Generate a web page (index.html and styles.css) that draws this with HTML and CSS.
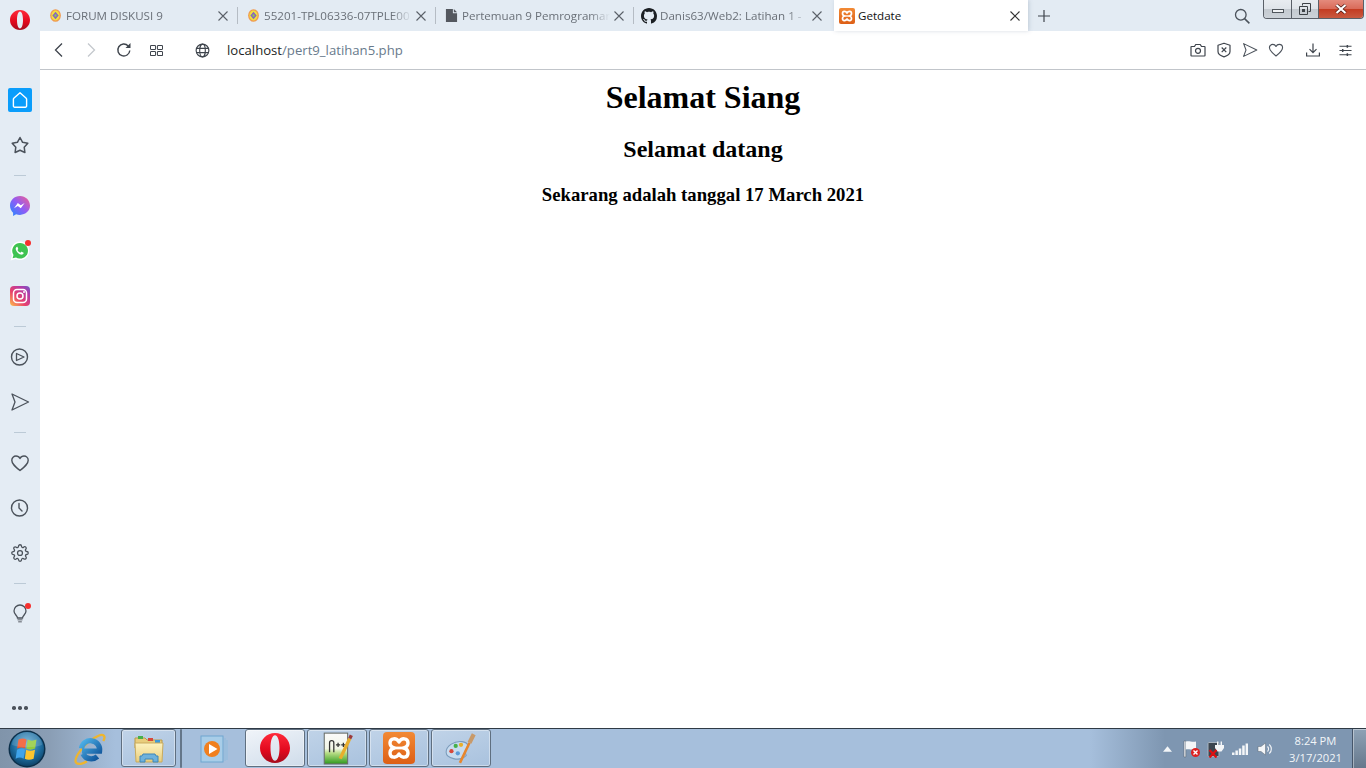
FILE: index.html
```html
<!DOCTYPE html>
<html lang="en">
<head>
<meta charset="utf-8">
<title>Getdate</title>
<link rel="stylesheet" href="styles.css">
</head>
<body>
<svg class="defs" aria-hidden="true">
  <defs>
    <linearGradient id="opera" x1="0" y1="0" x2="0" y2="1"><stop offset="0" stop-color="#ff2a3a"/><stop offset="0.6" stop-color="#e0081d"/><stop offset="1" stop-color="#a50b1c"/></linearGradient>
    <linearGradient id="msgr" x1="0" y1="1" x2="1" y2="0"><stop offset="0" stop-color="#1f8bff"/><stop offset="0.5" stop-color="#8f5cf6"/><stop offset="1" stop-color="#f5608c"/></linearGradient>
    <linearGradient id="insta" x1="0" y1="1" x2="1" y2="0"><stop offset="0" stop-color="#fdc14a"/><stop offset="0.4" stop-color="#e8416c"/><stop offset="0.75" stop-color="#b23aa8"/><stop offset="1" stop-color="#6f5bc8"/></linearGradient>
    <radialGradient id="orb" cx="0.5" cy="0.35" r="0.7"><stop offset="0" stop-color="#6ab0d8"/><stop offset="0.6" stop-color="#1d6c9e"/><stop offset="1" stop-color="#0c3a5c"/></radialGradient>
    <linearGradient id="iee" x1="0" y1="0" x2="1" y2="1"><stop offset="0" stop-color="#4fb4ea"/><stop offset="1" stop-color="#0c4f96"/></linearGradient>
    <linearGradient id="folder" x1="0" y1="0" x2="0" y2="1"><stop offset="0" stop-color="#fdf3c0"/><stop offset="1" stop-color="#e9cd7c"/></linearGradient>
    <linearGradient id="xamppbg" x1="0" y1="0" x2="0" y2="1"><stop offset="0" stop-color="#f28a35"/><stop offset="1" stop-color="#dd5f16"/></linearGradient>
    <linearGradient id="note" x1="0" y1="0" x2="0" y2="1"><stop offset="0" stop-color="#fafafa"/><stop offset="0.5" stop-color="#f2f6e6"/><stop offset="0.65" stop-color="#b6dc84"/><stop offset="1" stop-color="#2f9a1f"/></linearGradient>
    <symbol id="s-opera" viewBox="0 0 20 20"><path fill="url(#opera)" fill-rule="evenodd" d="M10 0c5.600 0 10 4.500 10 10s-4.400 10-10 10S0 15.500 0 10 4.400 0 10 0zm0 1.500c-1.900 0-3 3.800-3 8.500s1.100 8.500 3 8.500 3-3.800 3-8.500S11.900 1.500 10 1.500z"/></symbol>
    <symbol id="s-xampp" viewBox="0 0 16 16"><rect width="16" height="16" rx="2" fill="url(#xamppbg)"/><path fill="none" stroke="#fff" stroke-width="1.700" stroke-linejoin="round" d="M3.500 5.500C3.500 2.800 6.800 2.800 8 5c1.200-2.200 4.500-2.200 4.500.5 0 1.300-1 2.200-2.200 2.500 1.200.3 2.200 1.200 2.200 2.500 0 2.700-3.300 2.700-4.500.5-1.200 2.200-4.500 2.200-4.500-.5 0-1.300 1-2.200 2.200-2.500C4.500 7.700 3.500 6.800 3.500 5.500z"/><path stroke="#fff" stroke-width="1.400" d="M6 8h4"/></symbol>
    <symbol id="s-campus" viewBox="0 0 14 14"><ellipse cx="7" cy="7" rx="5.800" ry="6.800" fill="#f09a50"/><ellipse cx="7" cy="7" rx="4.400" ry="5.300" fill="#f2e23e"/><path fill="#8a62c0" d="M7 3l3.400 4L7 11 3.600 7z"/><path fill="#8fc05a" d="M7 5.200L8.600 7 7 8.800 5.400 7z"/></symbol>
    <symbol id="s-doc" viewBox="0 0 12 14"><path fill="#54585f" d="M0 0h7.500v4.500H12V14H0zM8.500 0L12 3.500H8.500z"/></symbol>
    <symbol id="s-send" viewBox="0 0 20 20"><path fill="none" stroke="#4b525b" stroke-width="1.300" stroke-linejoin="round" d="M2 2l16.500 8L2 18l3-8z"/></symbol>
    <symbol id="s-heart" viewBox="0 0 20 20"><path fill="none" stroke="#4b525b" stroke-width="1.400" stroke-linejoin="round" d="M10 17.500C5 13.500 1.800 10.800 1.800 7.200 1.800 4.700 3.800 3 6 3c1.700 0 3.200.9 4 2.500C10.800 3.900 12.300 3 14 3c2.200 0 4.200 1.700 4.200 4.200 0 3.600-3.200 6.300-8.200 10.300z"/></symbol>
  </defs>
</svg>

<div class="browser">
  <aside class="sidebar">
    <div class="logo"><svg class="i20"><use href="#s-opera"/></svg></div>
    <div class="side-item"><span class="home-tile"><svg class="i20" viewBox="0 0 20 20"><path fill="none" stroke="#fff" stroke-width="1.400" stroke-linejoin="round" d="M10 2.800l6.200 5.400c.3.300.4.500.4.900V16a1.200 1.200 0 0 1-1.200 1.200H4.600A1.200 1.200 0 0 1 3.400 16V9.100c0-.4.100-.6.400-.9z"/></svg></span></div>
    <div class="side-item"><svg class="i20" viewBox="0 0 20 20"><path fill="none" stroke="#4b525b" stroke-width="1.500" stroke-linejoin="round" d="M10 2.500l2.600 4.800 5.200 1-3.600 3.900.7 5.300-4.900-2.300-4.900 2.300.7-5.300-3.600-3.900 5.200-1z"/></svg></div>
    <div class="side-sep"></div>
    <div class="side-item"><svg class="i20" viewBox="0 0 20 20"><path fill="url(#msgr)" d="M10 0C4.400 0 0 4.100 0 9.600c0 2.900 1.200 5.400 3.100 7.100V20l3-1.700c1.200.4 2.500.6 3.900.6 5.600 0 10-4.100 10-9.300S15.600 0 10 0z"/><path fill="#fff" d="M4 12.300l3.800-5.300 3 2.300 3.800-2.300-3.800 5.300-3-2.300z"/></svg></div>
    <div class="side-item dot-host"><svg class="i20" viewBox="0 0 20 20"><path fill="#fff" d="M10 .5a9.300 9.300 0 0 0-8 14L.5 19.500l5.200-1.400A9.300 9.300 0 1 0 10 .5z"/><path fill="#3fc351" d="M10 2a7.800 7.800 0 0 0-6.500 12l-.9 3.300 3.400-.9A7.800 7.800 0 1 0 10 2z"/><path fill="#fff" d="M7.400 5.800c-.4-.1-.9.200-1.300.7-.6.800-.5 2 .5 3.700 1.100 1.800 2.700 3 4.300 3.400 1.200.3 2.200-.2 2.600-1 .2-.4.200-.8.100-.9l-1.900-1c-.2-.1-.4 0-.5.100l-.7.900c-1.300-.5-2.400-1.500-3-2.800l.6-.7c.1-.2.100-.3.100-.5z"/></svg><span class="red-dot"></span></div>
    <div class="side-item"><svg class="i20" viewBox="0 0 20 20"><rect width="20" height="20" rx="4" fill="url(#insta)"/><rect x="3.500" y="3.500" width="13" height="13" rx="3.500" fill="none" stroke="#fff" stroke-width="1.500"/><circle cx="10" cy="10" r="3" fill="none" stroke="#fff" stroke-width="1.500"/><circle cx="14" cy="6" r="1" fill="#fff"/></svg></div>
    <div class="side-sep"></div>
    <div class="side-item"><svg class="i20" viewBox="0 0 20 20"><circle cx="9.500" cy="10" r="8" fill="none" stroke="#4b525b" stroke-width="1.400"/><path fill="none" stroke="#4b525b" stroke-width="1.300" stroke-linejoin="round" d="M6.500 6.500L14 10l-7.500 3.500z"/></svg></div>
    <div class="side-item"><svg class="i20"><use href="#s-send"/></svg></div>
    <div class="side-sep"></div>
    <div class="side-item"><svg class="i20"><use href="#s-heart"/></svg></div>
    <div class="side-item"><svg class="i20" viewBox="0 0 20 20"><circle cx="9.500" cy="10" r="8" fill="none" stroke="#4b525b" stroke-width="1.400"/><path fill="none" stroke="#4b525b" stroke-width="1.400" stroke-linecap="round" d="M9 5.500V10l3 3"/></svg></div>
    <div class="side-item"><svg class="i18" viewBox="0 0 24 24"><path fill="none" stroke="#4b525b" stroke-width="1.700" stroke-linejoin="round" d="M19.400 15a1.650 1.650 0 0 0 .33 1.820l.06.06a2 2 0 0 1 0 2.830 2 2 0 0 1-2.830 0l-.06-.06a1.650 1.650 0 0 0-1.820-.33 1.650 1.650 0 0 0-1 1.510V21a2 2 0 0 1-2 2 2 2 0 0 1-2-2v-.09A1.650 1.650 0 0 0 9 19.400a1.650 1.650 0 0 0-1.820.33l-.06.06a2 2 0 0 1-2.830 0 2 2 0 0 1 0-2.830l.06-.06a1.650 1.650 0 0 0 .33-1.820 1.650 1.650 0 0 0-1.510-1H3a2 2 0 0 1-2-2 2 2 0 0 1 2-2h.09A1.650 1.650 0 0 0 4.600 9a1.650 1.650 0 0 0-.33-1.820l-.06-.06a2 2 0 0 1 0-2.830 2 2 0 0 1 2.830 0l.06.06a1.650 1.650 0 0 0 1.820.33H9a1.650 1.650 0 0 0 1-1.510V3a2 2 0 0 1 2-2 2 2 0 0 1 2 2v.09a1.650 1.650 0 0 0 1 1.510 1.650 1.650 0 0 0 1.820-.33l.06-.06a2 2 0 0 1 2.830 0 2 2 0 0 1 0 2.830l-.06.06a1.650 1.650 0 0 0-.33 1.820V9a1.650 1.650 0 0 0 1.510 1H21a2 2 0 0 1 2 2 2 2 0 0 1-2 2h-.09a1.650 1.650 0 0 0-1.510 1z"/><circle cx="12" cy="12" r="3.300" fill="none" stroke="#4b525b" stroke-width="1.700"/></svg></div>
    <div class="side-sep"></div>
    <div class="side-item dot-host"><svg class="i20" viewBox="0 0 20 20"><path fill="none" stroke="#4b525b" stroke-width="1.300" d="M7.500 14c0-2.200-3.500-3.600-3.500-7a6 6 0 0 1 12 0c0 3.400-3.500 4.800-3.500 7z"/><path stroke="#858b93" stroke-width="1.600" d="M7.500 15.800h5M8.200 17.800h3.600"/></svg><span class="red-dot"></span></div>
    <div class="side-more"><span></span><span></span><span></span></div>
  </aside>

  <div class="main">
    <div class="tabstrip">
      <div class="tab"><span class="fav"><svg class="i13"><use href="#s-campus"/></svg></span><span class="title">FORUM DISKUSI 9</span><svg class="close" viewBox="0 0 12 12"><path d="M1.500 1.500l9 9M10.500 1.500l-9 9"/></svg></div>
      <div class="tab"><span class="fav"><svg class="i13"><use href="#s-campus"/></svg></span><span class="title title-fade">55201-TPL06336-07TPLE00</span><svg class="close" viewBox="0 0 12 12"><path d="M1.500 1.500l9 9M10.500 1.500l-9 9"/></svg></div>
      <div class="tab"><span class="fav"><svg class="i13"><use href="#s-doc"/></svg></span><span class="title title-fade">Pertemuan 9 Pemrograman</span><svg class="close" viewBox="0 0 12 12"><path d="M1.500 1.500l9 9M10.500 1.500l-9 9"/></svg></div>
      <div class="tab tab-nosep"><span class="fav"><svg class="i16" viewBox="0 0 16 16"><path fill="#1b1f23" d="M8 0C3.580 0 0 3.580 0 8c0 3.540 2.290 6.530 5.470 7.590.4.070.55-.17.55-.38 0-.19-.01-.82-.01-1.490-2.010.37-2.530-.49-2.690-.94-.09-.23-.48-.94-.82-1.130-.28-.15-.68-.52-.01-.53.63-.01 1.080.58 1.230.82.720 1.210 1.870.87 2.330.66.070-.52.280-.87.510-1.070-1.780-.2-3.640-.89-3.640-3.950 0-.87.310-1.590.820-2.150-.08-.2-.36-1.020.080-2.120 0 0 .670-.21 2.200.82.640-.18 1.320-.27 2-.27.680 0 1.360.09 2 .27 1.530-1.040 2.200-.82 2.200-.82.440 1.100.160 1.920.080 2.120.510.560.820 1.270.820 2.150 0 3.070-1.870 3.750-3.650 3.950.290.250.540.730.540 1.480 0 1.070-.01 1.930-.01 2.200 0 .210.150.460.550.380A8.013 8.013 0 0 0 16 8c0-4.420-3.580-8-8-8z"/></svg></span><span class="title">Danis63/Web2: Latihan 1 -</span><svg class="close" viewBox="0 0 12 12"><path d="M1.500 1.500l9 9M10.500 1.500l-9 9"/></svg></div>
      <div class="tab tab-active"><span class="fav"><svg class="i16"><use href="#s-xampp"/></svg></span><span class="title">Getdate</span><svg class="close" viewBox="0 0 12 12"><path d="M1.500 1.500l9 9M10.500 1.500l-9 9"/></svg></div>
      <div class="newtab"><svg class="i12" viewBox="0 0 12 12"><path fill="none" stroke="#3e444c" stroke-width="1.200" d="M6 0v12M0 6h12"/></svg></div>
      <div class="tabsearch"><svg class="i16" viewBox="0 0 16 16"><circle cx="6.800" cy="6.800" r="5.300" fill="none" stroke="#4b525b" stroke-width="1.300"/><path stroke="#4b525b" stroke-width="1.500" d="M10.600 10.600l4.800 4.800"/></svg></div>
      <div class="winctl">
        <div class="wbtn wmin"><span class="min-bar"></span></div>
        <div class="wbtn wres"><svg class="i12" viewBox="0 0 12 12"><path fill="none" stroke="#3d4247" stroke-width="1" d="M3.500 2.500v-2h8v8h-2M.5 3.500h8v8h-8z"/><rect x="3" y="6" width="3" height="3" fill="#3d4247"/></svg></div>
        <div class="wbtn wclose"><svg class="i14" viewBox="0 0 14 10"><path stroke="#4a1610" stroke-width="3.600" d="M2.500 1l9 8M11.500 1l-9 8"/><path stroke="#fff" stroke-width="2.200" d="M2.500 1l9 8M11.500 1l-9 8"/></svg></div>
      </div>
    </div>

    <div class="toolbar">
      <div class="tbtn"><svg class="i16" viewBox="0 0 16 16"><path fill="none" stroke="#3e444c" stroke-width="1.300" d="M11 1.500L4.500 8l6.500 6.500"/></svg></div>
      <div class="tbtn"><svg class="i16" viewBox="0 0 16 16"><path fill="none" stroke="#c4c8cd" stroke-width="1.300" d="M5 1.500L11.500 8 5 14.500"/></svg></div>
      <div class="tbtn tbtn-reload"><svg class="i16" viewBox="0 0 16 16"><path fill="none" stroke="#3e444c" stroke-width="1.400" d="M13.800 8.500a6 6 0 1 1-1.600-4.600"/><path fill="#3e444c" d="M14.500 1v5h-5z"/></svg></div>
      <div class="tbtn"><svg class="i13" viewBox="0 0 14 12"><g fill="none" stroke="#3e444c" stroke-width="1.100"><rect x=".5" y=".5" width="5.500" height="4.500" rx="1"/><rect x="8" y=".5" width="5.500" height="4.500" rx="1"/><rect x=".5" y="7" width="5.500" height="4.500" rx="1"/><rect x="8" y="7" width="5.500" height="4.500" rx="1"/></g></svg></div>
      <div class="tbtn tbtn-globe"><svg class="i14b" viewBox="0 0 16 16"><g fill="none" stroke="#3e444c" stroke-width="1.200"><circle cx="8" cy="8" r="6.800"/><ellipse cx="8" cy="8" rx="3" ry="6.800"/><path d="M1.500 5.700h13M1.500 10.300h13"/></g></svg></div>
      <div class="url"><span class="host">localhost</span>/pert9_latihan5.php</div>
      <div class="tools">
        <div class="tool"><svg class="i16" viewBox="0 0 16 16"><g fill="none" stroke="#3e444c" stroke-width="1.200" stroke-linejoin="round"><path d="M1.500 4.500h3l1.200-2h4.600l1.200 2h3a.5.5 0 0 1 .5.500v8.500a.5.5 0 0 1-.5.500h-13a.5.5 0 0 1-.5-.500V5a.5.5 0 0 1 .5-.500z"/><circle cx="8" cy="8.800" r="2.500"/></g></svg></div>
        <div class="tool"><svg class="i16" viewBox="0 0 16 16"><g fill="none" stroke="#3e444c" stroke-width="1.200" stroke-linejoin="round"><path d="M8 1.200l6 2v6.300c0 2.500-3 4.500-6 5.300-3-.8-6-2.800-6-5.300V3.200z"/><path d="M5.700 5.500l4.600 4.600M10.300 5.500l-4.600 4.600"/></g></svg></div>
        <div class="tool"><svg class="i16"><use href="#s-send"/></svg></div>
        <div class="tool"><svg class="i16"><use href="#s-heart"/></svg></div>
        <div class="tool tool-gap"><svg class="i14" viewBox="0 0 14 14"><path fill="none" stroke="#3e444c" stroke-width="1.200" d="M7 .5v9M3.500 6.200L7 9.700l3.500-3.500M.6 9.500v3.500h12.800V9.500"/></svg></div>
        <div class="tool tool-gap2"><svg class="i13" viewBox="0 0 14 14"><path fill="none" stroke="#3e444c" stroke-width="1.100" d="M.5 2.500h13M.5 7h13M.5 11.500h13"/><path stroke="#3e444c" stroke-width="1.600" d="M9 1v3M4 5.500v3M9 10v3"/></svg></div>
      </div>
    </div>

    <main class="content">
      <h1>Selamat Siang</h1>
      <h2>Selamat datang</h2>
      <h3>Sekarang adalah tanggal 17 March 2021</h3>
    </main>
  </div>
</div>

<footer class="taskbar">
  <div class="orb"><svg class="i38" viewBox="0 0 38 38"><circle cx="19" cy="19" r="18.500" fill="#0b2f4a"/><circle cx="19" cy="19" r="17" fill="url(#orb)"/><path fill="#f0562a" d="M10.500 9.500c3-1.500 5.500-1.500 8 0l-1.400 9c-2.500-1.500-5-1.500-8 0z"/><path fill="#93cc3e" d="M19.700 9.500c2.500 1.500 5.500 1.500 8.800 0l-1.400 9c-3.300 1.500-6.300 1.500-8.800 0z"/><path fill="#3fa4ea" d="M9 19.700c3-1.500 5.500-1.500 8 0l-1.400 9c-2.500-1.500-5-1.500-8 0z"/><path fill="#fcc52e" d="M18.200 19.700c2.500 1.500 5.500 1.500 8.800 0l-1.400 9c-3.300 1.500-6.300 1.500-8.800 0z"/><path fill="#fff" opacity=".15" d="M4 15a15 13 0 0 1 30 0c-8 3-22 3-30 0z"/></svg></div>
  <div class="quick-ie"><svg class="i34" viewBox="0 0 32 32"><path fill="none" stroke="#eeb52e" stroke-width="2.200" d="M3 29C0 25 11 9 24 3.500c5-2 7 .5 4.500 5M3 29c2 2 6.500 1 10-1.500"/><path fill="none" stroke="url(#iee)" stroke-width="5" d="M8 15.500a8.500 8.500 0 1 1 17 2.500H8.500M9.500 20.500c2.500 5.500 9.500 6 13.500 2.500"/></svg></div>
  <div class="tb-btn tb-folder"><svg class="i32" viewBox="0 0 32 32"><path fill="#e9cd7c" stroke="#b99a4b" d="M2 6h10l2 2h15v8H2z"/><rect x="5" y="4" width="5" height="3" fill="#46b04a"/><rect x="15" y="6" width="5" height="3" fill="#d8483a"/><rect x="22" y="8" width="5" height="3" fill="#3e9ad8"/><path fill="url(#folder)" stroke="#c9ab5e" d="M2 11h28l-1 19H3z"/><path fill="#6db1dc" stroke="#3e86b8" d="M10 22h12l1 2h2v6h-5v-3h-8v3H7v-6h2z"/></svg></div>
  <div class="tb-sep"></div>
  <div class="tb-plain"><svg class="i30" viewBox="0 0 30 30"><rect x="2" y="2" width="22" height="26" fill="#a8cde8" stroke="#6fa6cf"/><path fill="none" stroke="#8fbcdd" d="M26 4v23M28 6v20"/><circle cx="13" cy="15" r="8" fill="#f0801e"/><path fill="#fff" d="M10 10l8.500 5-8.500 5z"/></svg></div>
  <div class="tb-btn tb-on"><svg class="i30"><use href="#s-opera"/></svg></div>
  <div class="tb-btn"><svg class="i34" viewBox="0 0 32 32"><rect x="4" y="2" width="22" height="29" fill="url(#note)" stroke="#6a6f6a"/><path stroke="#333" stroke-width="1.200" fill="none" d="M9 20V11a2 2 0 0 1 4 0v9M15 13h4M17 11v4M20 13h4M22 11v4"/><path stroke="#e8ae2c" stroke-width="3.200" d="M19 26L28 7"/><path stroke="#9c3a3a" stroke-width="3.200" d="M28 7l1.500-3"/></svg></div>
  <div class="tb-btn"><svg class="i32"><use href="#s-xampp"/></svg></div>
  <div class="tb-btn"><svg class="i34" viewBox="0 0 32 32"><path fill="#c8dcef" stroke="#7c9cbc" d="M2 20c0-6 8-11 15-10 6 1 7 5 4 7-2 1.500-1 4 0 6-3 3-8 4-12 3-4-1-7-3-7-6z"/><circle cx="7" cy="19" r="2" fill="#d8483a"/><circle cx="11" cy="14" r="2" fill="#46b04a"/><circle cx="16" cy="13" r="2" fill="#e8ae2c"/><circle cx="13" cy="21" r="2" fill="#5a9ad8"/><path stroke="#e8862c" stroke-width="2.400" d="M15 30l9-19"/><path stroke="#c89a6a" stroke-width="4" d="M24 11l4-8"/></svg></div>
  <div class="tray">
    <div class="tray-i"><svg class="i9" viewBox="0 0 10 6"><path fill="#f2f5f8" d="M5 0l5 6H0z"/></svg></div>
    <div class="tray-i"><svg class="i18" viewBox="0 0 18 18"><path fill="#f4f6f8" stroke="#5a6672" stroke-width=".6" d="M1 1h1.800v16H1z"/><path fill="#f4f6f8" d="M2.800 1.500c3.500-1 6 1 10.200 0v8c-4.200 1-6.700-1-10.200 0z"/><circle cx="12.500" cy="12.500" r="4.500" fill="#d22"/><path stroke="#fff" stroke-width="1.400" d="M10.500 10.500l4 4M14.500 10.500l-4 4"/></svg></div>
    <div class="tray-i"><svg class="i18" viewBox="0 0 18 18"><rect x="1" y="2.500" width="11" height="14" rx="1" fill="#3c4650" stroke="#a8b4c0"/><path fill="#f4f6f8" d="M8 5h9v3l-2.500 3.500h-4L8 8zM10 1.500h1.400V5H10zM13.600 1.500H15V5h-1.400z"/><path stroke="#e01010" stroke-width="2.200" d="M2.500 10l7 7.500M9.500 10l-7 7.500"/></svg></div>
    <div class="tray-i"><svg class="i16" viewBox="0 0 16 16"><path fill="#f4f6f8" d="M0 11.500h2.500V14H0zM3.400 9.500h2.500V14H3.400zM6.800 7.500h2.500V14H6.800zM10.200 4.500h2.500V14h-2.500zM13.600 2.500H16V14h-2.400z"/></svg></div>
    <div class="tray-i"><svg class="i16" viewBox="0 0 16 16"><path fill="#f4f6f8" stroke="#5a6672" stroke-width=".5" d="M1 5.500h3L8.500 2v12L4 10.500H1z"/><path fill="none" stroke="#f4f6f8" stroke-width="1.100" d="M10.500 5.500a3.500 3.500 0 0 1 0 5M12.300 3.500a6 6 0 0 1 0 9"/></svg></div>
    <div class="clock"><span>8:24 PM</span><span>3/17/2021</span></div>
    <div class="show-desktop"></div>
  </div>
</footer>
</body>
</html>
```
FILE: styles.css
```css
* { box-sizing: border-box; }
html, body { margin: 0; height: 768px; overflow: hidden; background: #fff; }
body { display: flex; flex-direction: column; font-family: "Open Sans", "Liberation Sans", sans-serif; }
.defs { position: absolute; width: 0; height: 0; }
svg { display: block; flex: none; }
.i9 { width: 9px; height: 6px; }
.i12 { width: 12px; height: 12px; }
.i13 { width: 13px; height: 13px; }
.i14 { width: 14px; height: 14px; }
.i14b { width: 15px; height: 15px; }
.i16 { width: 16px; height: 16px; }
.i18 { width: 18px; height: 18px; }
.i20 { width: 20px; height: 20px; }
.i30 { width: 30px; height: 30px; }
.i32 { width: 32px; height: 32px; }
.i34 { width: 34px; height: 34px; }
.i38 { width: 38px; height: 38px; }

.browser { height: 728px; display: flex; flex: none; }

/* sidebar */
.sidebar { width: 40px; flex: none; background: #e4ecf4; display: flex; flex-direction: column; align-items: center; }
.logo { height: 40px; margin-bottom: 37px; display: flex; align-items: center; justify-content: center; }
.side-item { position: relative; width: 40px; height: 45px; flex: none; display: flex; align-items: center; justify-content: center; }
.side-sep { flex: none; width: 12px; height: 16px; position: relative; display: flex; align-items: center; }
.side-sep::before { content: ""; display: block; width: 12px; height: 1px; background: #bccad6; }
.home-tile { width: 24px; height: 24px; border-radius: 2px; background: #0a9dfb; display: flex; align-items: center; justify-content: center; }
.red-dot { position: absolute; width: 6px; height: 6px; border-radius: 50%; background: #f5302e; left: 25px; top: 12px; }
.side-more { margin-top: auto; height: 40px; display: flex; align-items: center; gap: 2.500px; }
.side-more span { width: 3.500px; height: 3.500px; border-radius: 50%; background: #4b525b; }

/* tabs */
.main { flex: 1; min-width: 0; display: flex; flex-direction: column; }
.tabstrip { height: 31px; flex: none; background: #e3ebf3; display: flex; align-items: stretch; }
.tab { position: relative; width: 198px; flex: none; padding: 0 8px 0 6px; display: flex; align-items: center; font-size: 11.600px; color: #6a7078; }
.tab::after { content: ""; position: absolute; right: 0; top: 7px; width: 1px; height: 17px; background: #b5bcc4; }
.tab-nosep::after, .tab-active::after { display: none; }
.fav { width: 18px; flex: none; margin-right: 2px; display: flex; justify-content: center; }
.title { flex: 1; min-width: 0; white-space: nowrap; -webkit-mask-image: linear-gradient(90deg, #000 86%, transparent 100%); mask-image: linear-gradient(90deg, #000 86%, transparent 100%); }
.close { width: 12px; height: 12px; margin: 0 1px 0 3px; fill: none; stroke: #5a6068; stroke-width: 1.100; }
.tab-active { width: 194px; margin: 0 2px; padding-left: 4px; padding-right: 6px; background: #fff; color: #111; box-shadow: 1px 0 4px rgba(90, 110, 140, .25); }
.tab-active .title { -webkit-mask-image: none; mask-image: none; }
.tab-active .close { stroke: #333; }
.newtab { width: 28px; flex: none; display: flex; align-items: center; justify-content: center; }
.tabsearch { margin-left: auto; width: 24px; margin-right: 9px; display: flex; align-items: center; justify-content: center; }
.winctl { width: 101px; height: 19px; margin-right: 2px; flex: none; display: flex; border: 1px solid #5a6068; border-top: 0; border-radius: 0 0 4px 4px; overflow: hidden; }
.wbtn { display: flex; align-items: center; justify-content: center; border-right: 1px solid #5a6068; background: linear-gradient(#e8ecf0 0, #dfe4e9 50%, #c4cad0 52%, #ccd2d8 100%); }
.wmin { width: 28px; }
.wres { width: 27px; }
.wclose { flex: 1; border-right: 0; background: linear-gradient(#e48a7c 0, #d96a58 50%, #c43c22 52%, #c95a40 100%); }
.min-bar { width: 12px; height: 4px; background: #f0f2f4; border: 1px solid #50565c; margin-top: 3px; }

/* toolbar */
.toolbar { height: 39px; flex: none; background: #fff; border-bottom: 1px solid #c1c5ca; display: flex; align-items: center; padding-left: 3px; padding-right: 8px; }
.tbtn { width: 32px; height: 32px; flex: none; display: flex; align-items: center; justify-content: center; }
.tbtn-reload { margin-left: 1px; }
.tbtn-globe { margin-left: 14px; }
.url { margin-left: 9px; font-size: 13.150px; color: #687a8c; white-space: nowrap; }
.host { color: #1c1f24; }
.tools { margin-left: auto; display: flex; align-items: center; }
.tool { width: 26px; height: 26px; display: flex; align-items: center; justify-content: center; }
.tool-gap { margin-left: 11px; }
.tool-gap2 { margin-left: 6px; }

/* page */
.content { flex: 1; background: #fff; padding: 9px 8px 0; font-family: "Liberation Serif", "Times New Roman", serif; color: #000; text-align: center; }
h1 { margin: 0 0 20.440px; font-size: 32px; }
h2 { margin: 0 0 20.500px; font-size: 24px; }
h3 { margin: 0; font-size: 18.720px; }

/* taskbar */
.taskbar { height: 40px; flex: none; display: flex; align-items: stretch; border-top: 1px solid #2f3a45; background: linear-gradient(90deg, #8094aa 0, #8a9eb5 50px, #a6bfdc 115px, #a6bfdc 1090px, #7e96b1 1165px, #7e96b1 100%); }
.orb { width: 54px; flex: none; display: flex; align-items: center; justify-content: center; }
.quick-ie { width: 54px; margin-left: 9px; flex: none; display: flex; align-items: center; justify-content: center; }
.tb-btn { width: 60px; height: 38px; margin: 0 2px 0 0; flex: none; display: flex; align-items: center; justify-content: center; border: 1px solid #5f6f80; border-radius: 3px; box-shadow: inset 0 0 0 1px rgba(255, 255, 255, .4); background: linear-gradient(160deg, #c0d3e8, #a9c2de); }
.tb-folder { width: 55px; margin-left: 4px; margin-right: 4px; }
.tb-sep { width: 2px; flex: none; background: #64768a; border-radius: 1px; }
.tb-plain { width: 63px; flex: none; display: flex; align-items: center; justify-content: center; }
.tb-on { background: linear-gradient(160deg, #f0f4f9, #cfdcea); }
.tray { margin-left: auto; display: flex; align-items: center; color: #f2f5f8; }
.tray-i { width: 24.400px; height: 38px; display: flex; align-items: center; justify-content: center; }
.clock { width: 75px; padding-left: 2px; display: flex; flex-direction: column; align-items: center; font-size: 11.200px; line-height: 17px; }
.show-desktop { width: 14px; height: 39px; border-left: 1px solid #46566a; background: linear-gradient(#8ea2b6, #66788c); box-shadow: inset 1px 1px 0 rgba(255, 255, 255, .4); }
```
